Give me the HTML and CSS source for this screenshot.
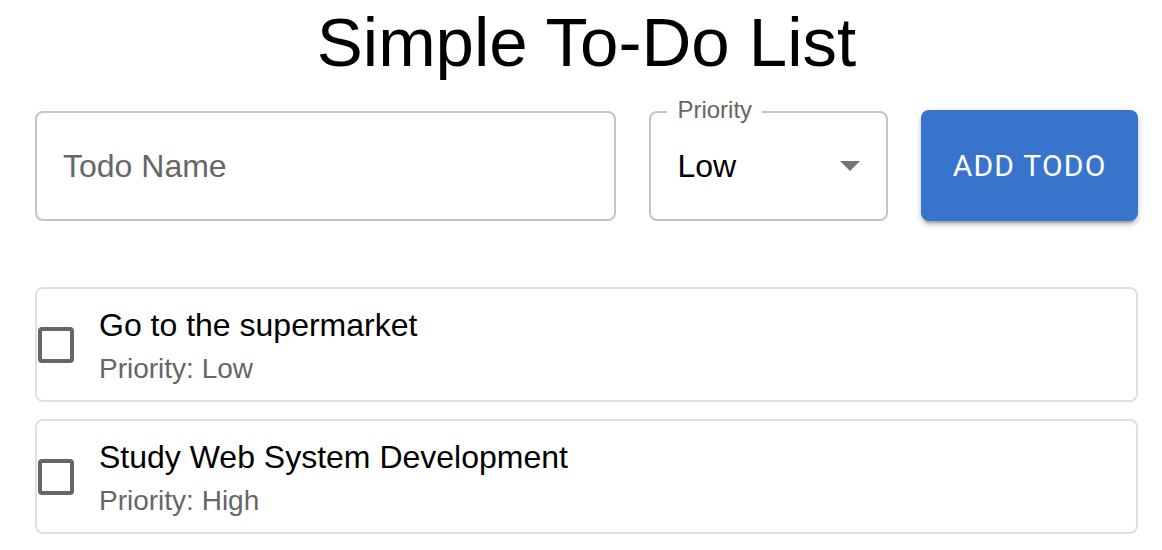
FILE: index.html
```html
<!DOCTYPE html>
<html lang="en">
<head>
<meta charset="utf-8">
<title>Simple To-Do List</title>
<link rel="stylesheet" href="styles.css">
</head>
<body>
<main class="app">
  <h1 class="title">Simple To-Do List</h1>
  <form class="form-row">
    <div class="field field-name">
      <input class="name-input" type="text" placeholder="Todo Name">
    </div>
    <div class="field field-select">
      <span class="float-label">Priority</span>
      <span class="select-value">Low</span>
      <svg class="select-arrow" width="20" height="10" viewBox="0 0 20 10"><path d="M0 0H20L10 10Z" fill="#757575"/></svg>
    </div>
    <button type="button" class="add-btn">Add Todo</button>
  </form>
  <ul class="todo-list">
    <li class="todo-item">
      <span class="checkbox"></span>
      <div class="todo-text">
        <span class="todo-name">Go to the supermarket</span>
        <span class="todo-priority">Priority: Low</span>
      </div>
    </li>
    <li class="todo-item">
      <span class="checkbox"></span>
      <div class="todo-text">
        <span class="todo-name">Study Web System Development</span>
        <span class="todo-priority">Priority: High</span>
      </div>
    </li>
  </ul>
</main>
</body>
</html>
```
FILE: styles.css
```css
* { box-sizing: border-box; }
html, body { margin: 0; padding: 0; background: #fff; }
body {
  font-family: "Liberation Sans", Arial, sans-serif;
  color: #000;
}
.app {
  padding: 4px 24px 0 35px;
}
.title {
  margin: 0;
  font-size: 69px;
  line-height: 78px;
  font-weight: normal;
  text-align: center;
}
.form-row {
  margin: 28px 0 0;
  display: flex;
  align-items: flex-start;
  height: 111px;
}
.field {
  height: 110px;
  border: 2px solid #c4c4c4;
  border-radius: 8px;
  display: flex;
  align-items: center;
  margin-top: 1px;
}
.field-name {
  width: 582px;
}
.name-input {
  width: 100%;
  border: none;
  outline: none;
  background: transparent;
  font-family: "Liberation Sans", Arial, sans-serif;
  font-size: 32px;
  padding: 0 26px;
  color: #000;
}
.name-input::placeholder { color: #666; opacity: 1; }
.field-select {
  width: 239px;
  margin-left: 33px;
  position: relative;
  padding: 0 26px;
  justify-content: space-between;
}
.float-label {
  position: absolute;
  left: 16px;
  top: -15px;
  font-size: 24px;
  line-height: 24px;
  color: #666;
  background: #fff;
  padding: 0 10px;
}
.select-value {
  font-size: 32px;
  color: #000;
}
.select-arrow { display: block; }
.add-btn {
  margin-left: 33px;
  width: 217px;
  height: 111px;
  border: none;
  border-radius: 8px;
  background: #3874cb;
  color: #fff;
  font-family: Roboto, "Liberation Sans", sans-serif;
  font-weight: 400;
  font-size: 30px;
  letter-spacing: 1.2px;
  text-transform: uppercase;
  box-shadow: 0 6px 2px -4px rgba(0,0,0,.2), 0 4px 4px 0 rgba(0,0,0,.14), 0 2px 10px 0 rgba(0,0,0,.12);
  padding: 0;
}
.todo-list {
  list-style: none;
  margin: 66px 0 0;
  padding: 0;
  display: flex;
  flex-direction: column;
  gap: 17px;
}
.todo-item {
  height: 115px;
  border: 2px solid #e0e0e0;
  border-radius: 8px;
  display: flex;
  align-items: center;
}
.checkbox {
  width: 36px;
  height: 36px;
  border: 4px solid #666;
  border-radius: 4px;
  margin-left: 1px;
  flex: none;
}
.todo-text {
  margin-left: 25px;
  display: flex;
  flex-direction: column;
}
.todo-name {
  font-size: 32px;
  line-height: 48px;
  color: #000;
}
.todo-priority {
  font-size: 28px;
  line-height: 40px;
  color: #666;
}
```
